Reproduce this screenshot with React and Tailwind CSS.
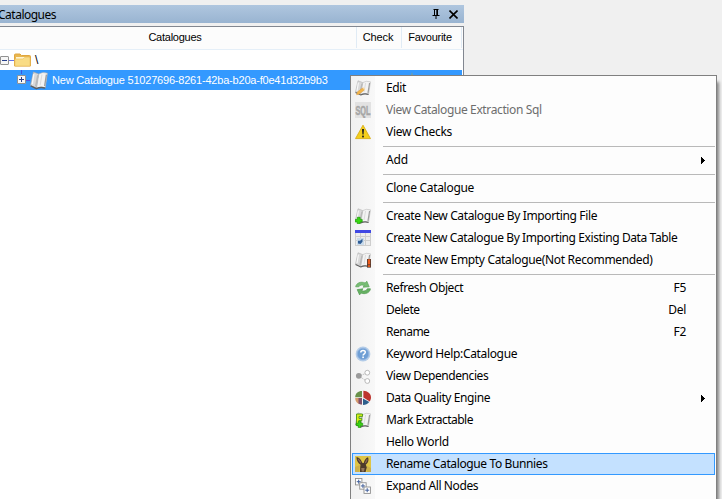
import React from "react";

function Book() {
  return (
    <>
      <path d="M3 .8 L7.8 2.6 L5.8 14.3 L.4 12.3Z" fill="#d9d9d9" stroke="#a8a8a8" strokeWidth=".5" />
      <path d="M7.8 2.6 Q11 .4 15.5 1.8 L13.6 14 Q9.5 12.6 5.8 14.6Z" fill="#f3f3f3" stroke="#b0b0b0" strokeWidth=".5" />
      <path d="M.6 12.6 L5.7 14.9 Q9.5 13.1 13.6 14.5" fill="none" stroke="#5f5f5f" strokeWidth="1.1" />
      <path d="M14.6 3 L13 12.8" stroke="#9d9d9d" strokeWidth="1.2" />
      <path d="M7 3.6 L5 13" stroke="#b9b9b9" strokeWidth="1.3" />
      <path d="M3.4 2.6 L2 11" stroke="#f7f7f7" strokeWidth="1.2" />
      <path d="M10.6 3 L9 12" stroke="#dcdcdc" strokeWidth="1" />
    </>
  );
}

const art = {
  edit: (
    <>
      <Book />
      <path d="M1.6 14.8 L2.6 11.8 L7.6 8 L9.3 10 L4.3 14Z" fill="#f2b548" stroke="#dc9a3c" strokeWidth=".5" />
      <path d="M7.6 8 L8.6 7.3 L10.2 9.2 L9.3 10Z" fill="#f7d7a0" />
    </>
  ),
  sql: (
    <>
      <rect width="16" height="16" fill="#e2e2e2" />
      <text x=".5" y="13" fontSize="13" fontWeight="700" textLength="15" lengthAdjust="spacingAndGlyphs" fill="#a6a6a6" stroke="#a6a6a6" strokeWidth=".5" fontFamily="Liberation Sans, sans-serif">SQL</text>
    </>
  ),
  warn: (
    <>
      <path d="M8 1.2 L15.5 14.6 H.5Z" fill="#f4cf1c" stroke="#d8ae18" strokeWidth=".9" strokeLinejoin="round" />
      <path d="M7 5 H9 L8.6 10.6 H7.4Z" fill="#222" />
      <rect x="7.1" y="11.6" width="1.8" height="1.8" fill="#222" />
    </>
  ),
  add: (
    <>
      <Book />
      <path d="M2.3 9.3 h2.8 v2.1 h2.1 v2.6 h-2.1 v1.8 h-2.8 v-1.8 h-2.1 v-2.6 h2.1z" fill="#36d811" stroke="#1e9a08" strokeWidth=".7" />
    </>
  ),
  table: (
    <>
      <rect y="3" width="16" height="13" fill="#ededed" />
      <path d="M0 6.5H16 M0 10.5H16 M0 15.5H16 M.5 3V16 M5.5 3V16 M10.5 3V16 M15.5 3V16" stroke="#cecece" strokeWidth="1" />
      <rect width="16" height="3" fill="#4048e4" />
      <rect x="2" y="8" width="7" height="7" fill="#cadbea" />
      <path d="M3 13.5 V10.8 H5 L7.5 8.8 V11.8 L5.5 14Z" fill="#2e5c96" />
    </>
  ),
  empty: (
    <>
      <Book />
      <rect x="12" y="7" width="4" height="8.6" fill="#4d3a32" />
      <rect x="12.8" y="7.3" width="2.4" height="5.1" fill="#ee5c1c" />
      <rect x="12.8" y="13.2" width="2.4" height="1.7" fill="#ee5c1c" />
    </>
  ),
  refresh: (
    <>
      <path d="M.7 6.8 C1.2 3 6 1 10.2 3 L11.8 1.2 L14.2 6.8 L8 7.2 L9.3 5.6 C7 4.5 4.8 5 3.8 6.8Z" fill="#78bd75" stroke="#5aa358" strokeWidth=".7" />
      <path d="M15.4 8.8 C15 12.8 10 14.8 6 13 L4.6 14.9 L2.2 9.6 L8 8.8 L6.7 10.5 C9 11.6 11.4 11 12.3 8.8Z" fill="#66b163" stroke="#4f9a4d" strokeWidth=".7" />
    </>
  ),
  help: (
    <>
      <circle cx="8" cy="8" r="7.4" fill="#b3cce8" />
      <circle cx="8" cy="8" r="5.7" fill="#6f9fd5" stroke="#8fb3de" strokeWidth=".8" />
      <path d="M5.8 6.5 C5.8 3.8 10.3 3.8 10.3 6.3 C10.3 7.9 8.1 7.8 8.1 9.6" fill="none" stroke="#fff" strokeWidth="1.5" />
      <rect x="7.3" y="10.5" width="1.6" height="1.6" fill="#fff" />
    </>
  ),
  deps: (
    <>
      <path d="M4 8 L12 5 M4 8 L12 13.5" stroke="#aaa" strokeWidth=".8" strokeDasharray="1.2 .8" />
      <circle cx="3.8" cy="7.8" r="2.9" fill="#9b9b9b" />
      <circle cx="12.3" cy="4.7" r="2.4" fill="#fff" stroke="#aaa" strokeWidth=".8" />
      <circle cx="12.3" cy="13" r="2.4" fill="#fff" stroke="#aaa" strokeWidth=".8" />
    </>
  ),
  pie: (
    <>
      <path d="M7 7.2 V1 C3 1 .2 3.5 .2 7.2Z" fill="#68914a" />
      <path d="M8.4 7.6 V.8 C12.5 .8 16 3.8 16 7.5 C16 9 15.5 10.2 14.7 11.4Z" fill="#bd352f" />
      <path d="M.2 8 L7 8 V14.5 C3 14.3 .2 12 .2 8Z" fill="#d69a6c" />
      <path d="M3.5 13.6 L3.5 8 H7 V14.5 C5.5 14.5 4.3 14.2 3.5 13.6Z" fill="#80506c" />
      <path d="M8 8.4 L14.3 12 C12.7 14 10.6 15 8 15Z" fill="#2e5f8c" />
    </>
  ),
  mark: (
    <>
      <Book />
      <path d="M1.5 2 H7.5 V4.4 H4 V6.4 H6.8 V8.6 H4 V10.5 H6 V13 H1.5Z" fill="#d9ee19" stroke="#4a9a16" strokeWidth=".9" />
      <path d="M3.3 9 h2.4 v2.2 h2 v2.4 h-2 v2 h-2.4 v-2 h-2 v-2.4 h2z" fill="#38d414" stroke="#239a0a" strokeWidth=".7" />
    </>
  ),
  bunny: (
    <>
      <rect width="16" height="16" fill="#dfc545" />
      <path d="M0 11 L5 9 L4 16 H0Z M12 10 L16 12 V16 H12Z" fill="#cdb04a" />
      <path d="M1.5 1 C4.5 1.5 6.3 4 7.2 6.8 L8.8 7 C9.2 4.3 10.8 2 13 1.2 C14.2 4 13 7.2 10.8 8.6 L11.8 11.5 L10.6 16 H5 L5.2 11 L5.5 8.8 C2.8 7 1.3 4 1.5 1Z" fill="#4d3a2b" />
      <path d="M3 2.8 L5.8 6.7 M12.2 3.2 L10.4 7" stroke="#8a6855" strokeWidth="1.2" />
      <path d="M6.2 12 H9.6 L9 15.5 H6.7Z" fill="#92765a" />
    </>
  ),
  expand: (
    <>
      {[0.5, 4.75, 9].map((p) => (
        <g key={p}>
          <rect x={p} y={p} width="6.4" height="6.4" fill="#fff" stroke="#8f8f8f" strokeWidth=".9" />
          <path d={`M${p + 1.2} ${p + 3.2}h4M${p + 3.2} ${p + 1.2}v4`} stroke="#405f9c" strokeWidth="1" />
        </g>
      ))}
    </>
  ),
};

const items = [
  { t: "Edit", i: "edit", ls: "tracking-[-0.35px]" },
  { t: "View Catalogue Extraction Sql", i: "sql", off: true, ls: "tracking-[-0.38px]" },
  { t: "View Checks", i: "warn", ls: "tracking-[-0.27px]" },
  null,
  { t: "Add", sub: true, ls: "tracking-[-0.1px]" },
  null,
  { t: "Clone Catalogue", ls: "tracking-[-0.3px]" },
  null,
  { t: "Create New Catalogue By Importing File", i: "add", ls: "tracking-[-0.37px]" },
  { t: "Create New Catalogue By Importing Existing Data Table", i: "table", ls: "tracking-[-0.4px]" },
  { t: "Create New Empty Catalogue(Not Recommended)", i: "empty", ls: "tracking-[-0.33px]" },
  null,
  { t: "Refresh Object", i: "refresh", k: "F5", ls: "tracking-[-0.4px]" },
  { t: "Delete", k: "Del", ls: "tracking-[-0.5px]" },
  { t: "Rename", k: "F2", ls: "tracking-[-0.5px]" },
  { t: "Keyword Help:Catalogue", i: "help", ls: "tracking-[-0.34px]" },
  { t: "View Dependencies", i: "deps", ls: "tracking-[-0.42px]" },
  { t: "Data Quality Engine", i: "pie", sub: true, ls: "tracking-[-0.4px]" },
  { t: "Mark Extractable", i: "mark", ls: "tracking-[-0.5px]" },
  { t: "Hello World", ls: "tracking-[-0.27px]" },
  { t: "Rename Catalogue To Bunnies", i: "bunny", on: true, ls: "tracking-[-0.38px]" },
  { t: "Expand All Nodes", i: "expand", ls: "tracking-[-0.38px]" },
];

function Row({ item }) {
  if (!item) return <div className="ml-8 mr-px h-1.5 shrink-0 pt-[3px]"><div className="h-px bg-[#b9b9b9]" /></div>;
  return (
    <div className={`ml-px mr-px flex h-[22px] shrink-0 items-center border pl-[2px] ${item.on ? "border-[#3399ff] bg-[#c4e1ff]" : "border-transparent"}`}>
      <svg viewBox="0 0 16 16" className="h-4 w-4 shrink-0">{item.i && art[item.i]}</svg>
      <span className={`ml-[15px] flex-1 whitespace-nowrap ${item.ls} ${item.off ? "text-[#6d6d6d]" : ""}`}>{item.t}</span>
      {item.k && <span className="pr-[28px] tracking-[-0.3px]">{item.k}</span>}
      {item.sub && <svg viewBox="0 0 4 7" shapeRendering="crispEdges" className="mr-[9px] h-[7px] w-1"><path d="M0 0L4 3.5L0 7Z" /></svg>}
    </div>
  );
}

function Expander({ plus }) {
  return (
    <svg viewBox="0 0 9 9" className="h-[9px] w-[9px] shrink-0">
      <rect x=".5" y=".5" width="8" height="8" rx=".5" fill="#f6f6f6" stroke="#919191" />
      <path d={plus ? "M2 4.5H7M4.5 2V7" : "M2 4.5H7"} stroke="#27408b" />
    </svg>
  );
}

export default function App() {
  return (
    <div className="relative h-[499px] w-[722px] overflow-hidden bg-[#f0f0f0] pt-[5px] text-black">
      <div className="flex h-[18px] w-[464px] items-center bg-linear-to-b from-[#afc6df] to-[#99b4d1] font-['Noto_Sans',sans-serif] text-[12px]">
        <span className="-ml-[2px] flex-1 pt-px tracking-[-0.5px]">Catalogues</span>
        <svg viewBox="0 0 8 10" className="mr-[9px] h-[10px] w-2" fill="none" stroke="#000">
          <path d="M1.5 .5H6.5M2.5 .5V6M5.5 .5V6M4.8 .5V6M.5 6.5H7.5M4 6.5V10" />
        </svg>
        <svg viewBox="0 0 9 9" className="mr-[6px] h-[9px] w-[9px]" stroke="#000" strokeWidth="1.6"><path d="M.5 .5L8.5 8.5M8.5 .5L.5 8.5" /></svg>
      </div>
      <div className="mt-[3px] h-[473px] w-[464px] border-r border-t border-[#828790] bg-white font-['Liberation_Sans',sans-serif] text-[11px]">
        <div className="flex h-[23px] items-center border-b border-[#e5eff8] bg-[#fcfcfc] pb-[2px] text-center leading-[21px]">
          <div className="h-[21px] w-[357px] border-r border-[#e0ebf5] pr-[6px] tracking-[-0.25px]">Catalogues</div>
          <div className="h-[21px] w-[45px] border-r border-[#e0ebf5] pr-[2px] tracking-[-0.1px]">Check</div>
          <div className="h-[21px] w-[60px] border-r border-[#e0ebf5] pr-[3px] tracking-[-0.25px]">Favourite</div>
        </div>
        <div className="flex h-5 items-center">
          <Expander />
          <div className="h-px w-[5px] bg-[#6673e8]" />
          <svg viewBox="0 0 17 14" className="h-[14px] w-[17px]">
            <path d="M.5 13V2Q.5 1 1.5 1H6L7.5 2.5H15.5Q16.5 2.5 16.5 3.5V13Z" fill="#e9b64e" stroke="#e0a63e" />
            <path d="M2 4H15V12H2Z" fill="#fff4ce" />
            <path d="M1 6H9L10.5 4.5H16V13H1Z" fill="#f9dc85" stroke="#ecc364" strokeWidth=".7" />
          </svg>
          <span className="ml-1 text-[12px]">\</span>
        </div>
        <div className="flex h-5 w-[462px] items-center bg-[#3399ff] text-white">
          <div className="ml-[17px] flex h-5 flex-col items-center">
            <div className="mb-px h-[4px] w-px bg-[#3a55e0]" />
            <Expander plus />
          </div>
          <div className="h-px w-1 bg-[#5257df]" />
          <svg viewBox="0 0 16 16" className="h-[19px] w-[18px]" preserveAspectRatio="none"><Book /></svg>
          <span className="ml-1 flex-1 whitespace-nowrap tracking-[-0.2px]">New Catalogue 51027696-8261-42ba-b20a-f0e41d32b9b3</span>
          <svg viewBox="0 0 16 16" className="mr-[42px] h-4 w-4"><path d="M8 0L10 5.5H16L11 9L13 15L8 11.5L3 15L5 9L0 5.5H6Z" fill="#6b9fae" /></svg>
        </div>
      </div>
      <div className="absolute left-[350px] top-[75px] h-[430px] w-[367px] border border-[#808080] bg-linear-to-r from-[#f1f1f1] from-0% via-[#f8f8f8] via-[24px] to-[#fdfdfd] to-[24px] pt-px font-['Noto_Sans',sans-serif] text-[12px] shadow-[3px_6px_3px_-1px_rgba(0,0,0,0.45)]">
        {items.map((item, n) => <Row key={n} item={item} />)}
      </div>
    </div>
  );
}
